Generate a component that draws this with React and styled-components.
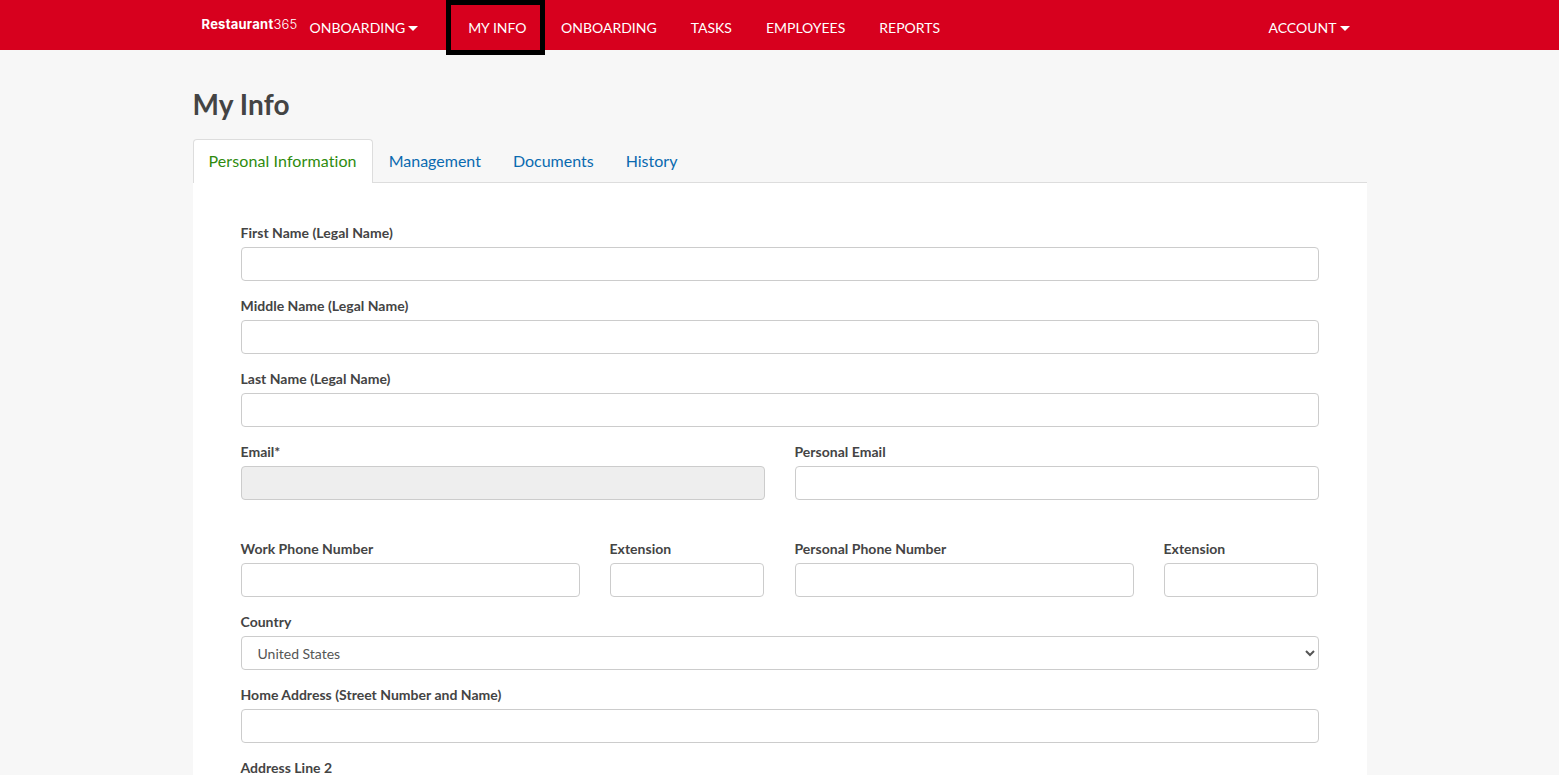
import React from "react";
import styled, { createGlobalStyle } from "styled-components";

const GlobalStyle = createGlobalStyle`
  * {
    box-sizing: border-box;
  }

  html, body {
    margin: 0;
    height: 775px;
    overflow: hidden;
  }

  body {
    background: #f7f7f7;
    color: #444;
    font-family: Lato, "Liberation Sans", sans-serif;
    font-size: 14px;
    line-height: 20px;
  }
`;

const Navbar = styled.nav`
  height: 50px;
  background: #d7001e;
`;

const NavInner = styled.div`
  width: 1174px;
  height: 50px;
  margin: 0 auto;
  padding-left: 8px;
  display: flex;
  align-items: flex-start;
`;

const Brand = styled.a`
  width: 91px;
  margin: 14px 0 0 1px;
  color: #fff;
  font-family: Inter, Roboto, sans-serif;
  font-size: 13px;
  font-weight: 700;
  letter-spacing: 0.25px;
  white-space: nowrap;

  span {
    font-weight: 300;
  }
`;

const NavLink = styled.a`
  display: flex;
  align-items: center;
  height: 50px;
  padding: 5px 17px 0;
  color: #fff;
  font-size: 14px;
  white-space: nowrap;
`;

const FocusedNavLink = styled(NavLink)`
  height: 45px;
  margin: 5px 4px 0 16px;
  padding: 0 13.5px 0 17px;
  outline: 5px solid #000;
`;

const AccountLink = styled(NavLink)`
  margin-left: auto;
  padding-right: 17px;
`;

const Caret = styled.i`
  width: 0;
  height: 0;
  margin: 1px 0 0 3px;
  border-top: 5px solid #fff;
  border-left: 5px solid transparent;
  border-right: 5px solid transparent;
`;

const Page = styled.main`
  width: 1174px;
  margin: 0 auto;
`;

const Title = styled.h1`
  margin: 0;
  padding-top: 35px;
  height: 89px;
  color: #444;
  font-size: 28px;
  font-weight: 700;
  letter-spacing: 0.1px;
  line-height: 38px;
`;

const Tabs = styled.ul`
  display: flex;
  height: 44px;
  margin: 0;
  padding: 0;
  list-style: none;
  border-bottom: 1px solid #ddd;
`;

const Tab = styled.li`
  height: 44px;
  padding: 10px 15px 0;
  border: 1px solid ${(p) => (p.$active ? "#ddd" : "transparent")};
  border-bottom: 0;
  border-radius: 4px 4px 0 0;
  background: ${(p) => (p.$active ? "#fff" : "transparent")};
  color: ${(p) => (p.$active ? "#2e8b0e" : "#0a6ab0")};
  font-size: 16px;
  letter-spacing: ${(p) => (p.$active ? "0.1px" : "0")};
  line-height: 22px;
`;

const Panel = styled.section`
  background: #fff;
  padding: 40px 48px;
`;

const Field = styled.div`
  margin-bottom: 15px;
`;

const Label = styled.label`
  display: block;
  margin-bottom: 4px;
  color: #444;
  font-weight: 700;
  letter-spacing: 0.02px;
`;

const TextInput = styled.input`
  display: block;
  width: 100%;
  height: 34px;
  border: 1px solid #ccc;
  border-radius: 4px;
  background: ${(p) => (p.disabled ? "#eee" : "#fff")};
`;

const Select = styled.select`
  display: block;
  width: 100%;
  height: 34px;
  padding: 0 12px;
  border: 1px solid #ccc;
  border-radius: 4px;
  background: #fff;
  color: #555;
  font-family: Lato, sans-serif;
  font-size: 14px;
`;

const HalfRow = styled.div`
  display: grid;
  grid-template-columns: 524px 524px;
  gap: 30px;
  margin-top: ${(p) => p.$top || 0}px;
`;

const PhoneGroup = styled.div`
  display: grid;
  grid-template-columns: 339px 154px;
  column-gap: 30px;
`;

const LabelledInput = ({ label, disabled }) => (
  <Field>
    <Label>{label}</Label>
    <TextInput disabled={disabled} />
  </Field>
);

export default function App() {
  return (
    <>
      <GlobalStyle />
      <Navbar>
        <NavInner>
          <Brand>
            Restaurant<span>365</span>
          </Brand>
          <NavLink>
            ONBOARDING
            <Caret />
          </NavLink>
          <FocusedNavLink>MY INFO</FocusedNavLink>
          <NavLink>ONBOARDING</NavLink>
          <NavLink>TASKS</NavLink>
          <NavLink>EMPLOYEES</NavLink>
          <NavLink>REPORTS</NavLink>
          <AccountLink>
            ACCOUNT
            <Caret />
          </AccountLink>
        </NavInner>
      </Navbar>
      <Page>
        <Title>My Info</Title>
        <Tabs>
          <Tab $active>Personal Information</Tab>
          <Tab>Management</Tab>
          <Tab>Documents</Tab>
          <Tab>History</Tab>
        </Tabs>
        <Panel>
          <LabelledInput label="First Name (Legal Name)" />
          <LabelledInput label="Middle Name (Legal Name)" />
          <LabelledInput label="Last Name (Legal Name)" />
          <HalfRow>
            <LabelledInput label="Email*" disabled />
            <LabelledInput label="Personal Email" />
          </HalfRow>
          <HalfRow $top={24}>
            <PhoneGroup>
              <LabelledInput label="Work Phone Number" />
              <LabelledInput label="Extension" />
            </PhoneGroup>
            <PhoneGroup>
              <LabelledInput label="Personal Phone Number" />
              <LabelledInput label="Extension" />
            </PhoneGroup>
          </HalfRow>
          <Field>
            <Label>Country</Label>
            <Select defaultValue="United States">
              <option>United States</option>
            </Select>
          </Field>
          <LabelledInput label="Home Address (Street Number and Name)" />
          <LabelledInput label="Address Line 2" />
        </Panel>
      </Page>
    </>
  );
}
